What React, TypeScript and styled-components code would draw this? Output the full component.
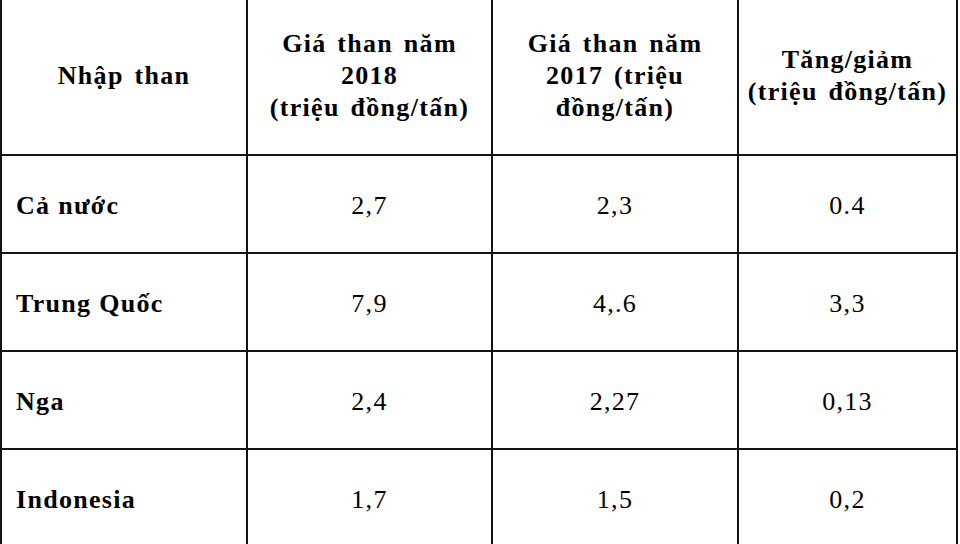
import React from "react";
import styled, { createGlobalStyle } from "styled-components";

const Global = createGlobalStyle`
  html, body { margin: 0; padding: 0; background: #ffffff; }
  body { font-family: "Liberation Serif", "Times New Roman", serif; color: #000; }
  * { box-sizing: border-box; }
`;

const Page = styled.div`
  width: 960px;
  height: 544px;
  overflow: hidden;
  background: #fff;
`;

const Table = styled.table`
  border-collapse: separate;
  border-spacing: 0;
  table-layout: fixed;
  width: 958px;
  border-left: 2px solid #141414;
  font-family: "Liberation Serif", "Times New Roman", serif;
  font-size: 26px;
  letter-spacing: 1.3px;
  color: #000;
`;

const Cell = styled.td<{ $align?: "left" | "center" }>`
  border-right: 2px solid #141414;
  border-bottom: 2px solid #141414;
  text-align: ${(p) => p.$align ?? "center"};
  vertical-align: middle;
  padding: 0 6px;
`;

const HeadRow = styled.tr`
  height: 156px;
`;

const BodyRow = styled.tr`
  height: 98px;
`;

const HeadCell = styled(Cell).attrs({ as: "th" })`
  font-weight: bold;
  line-height: 32px;
  word-spacing: 3px;
  padding-bottom: 3px;
`;

const LabelCell = styled(Cell)`
  font-weight: bold;
  padding-left: 14px;
  padding-top: 3px;
  line-height: 32px;
`;

const ValueCell = styled(Cell)`
  font-weight: normal;
  padding-top: 3px;
  line-height: 32px;
`;

const rows = [
  { name: "Cả nước", a: "2,7", b: "2,3", c: "0.4" },
  { name: "Trung Quốc", a: "7,9", b: "4,.6", c: "3,3" },
  { name: "Nga", a: "2,4", b: "2,27", c: "0,13" },
  { name: "Indonesia", a: "1,7", b: "1,5", c: "0,2" },
];

export default function App() {
  return (
    <Page>
      <Global />
      <Table>
        <colgroup>
          <col style={{ width: 246 }} />
          <col style={{ width: 245 }} />
          <col style={{ width: 246 }} />
          <col style={{ width: 219 }} />
        </colgroup>
        <thead>
          <HeadRow>
            <HeadCell>Nhập than</HeadCell>
            <HeadCell>
              Giá than năm
              <br />
              2018
              <br />
              (triệu đồng/tấn)
            </HeadCell>
            <HeadCell>
              Giá than năm
              <br />
              2017 (triệu
              <br />
              đồng/tấn)
            </HeadCell>
            <HeadCell>
              Tăng/giảm
              <br />
              (triệu đồng/tấn)
            </HeadCell>
          </HeadRow>
        </thead>
        <tbody>
          {rows.map((r) => (
            <BodyRow key={r.name}>
              <LabelCell $align="left">{r.name}</LabelCell>
              <ValueCell>{r.a}</ValueCell>
              <ValueCell>{r.b}</ValueCell>
              <ValueCell>{r.c}</ValueCell>
            </BodyRow>
          ))}
        </tbody>
      </Table>
    </Page>
  );
}
